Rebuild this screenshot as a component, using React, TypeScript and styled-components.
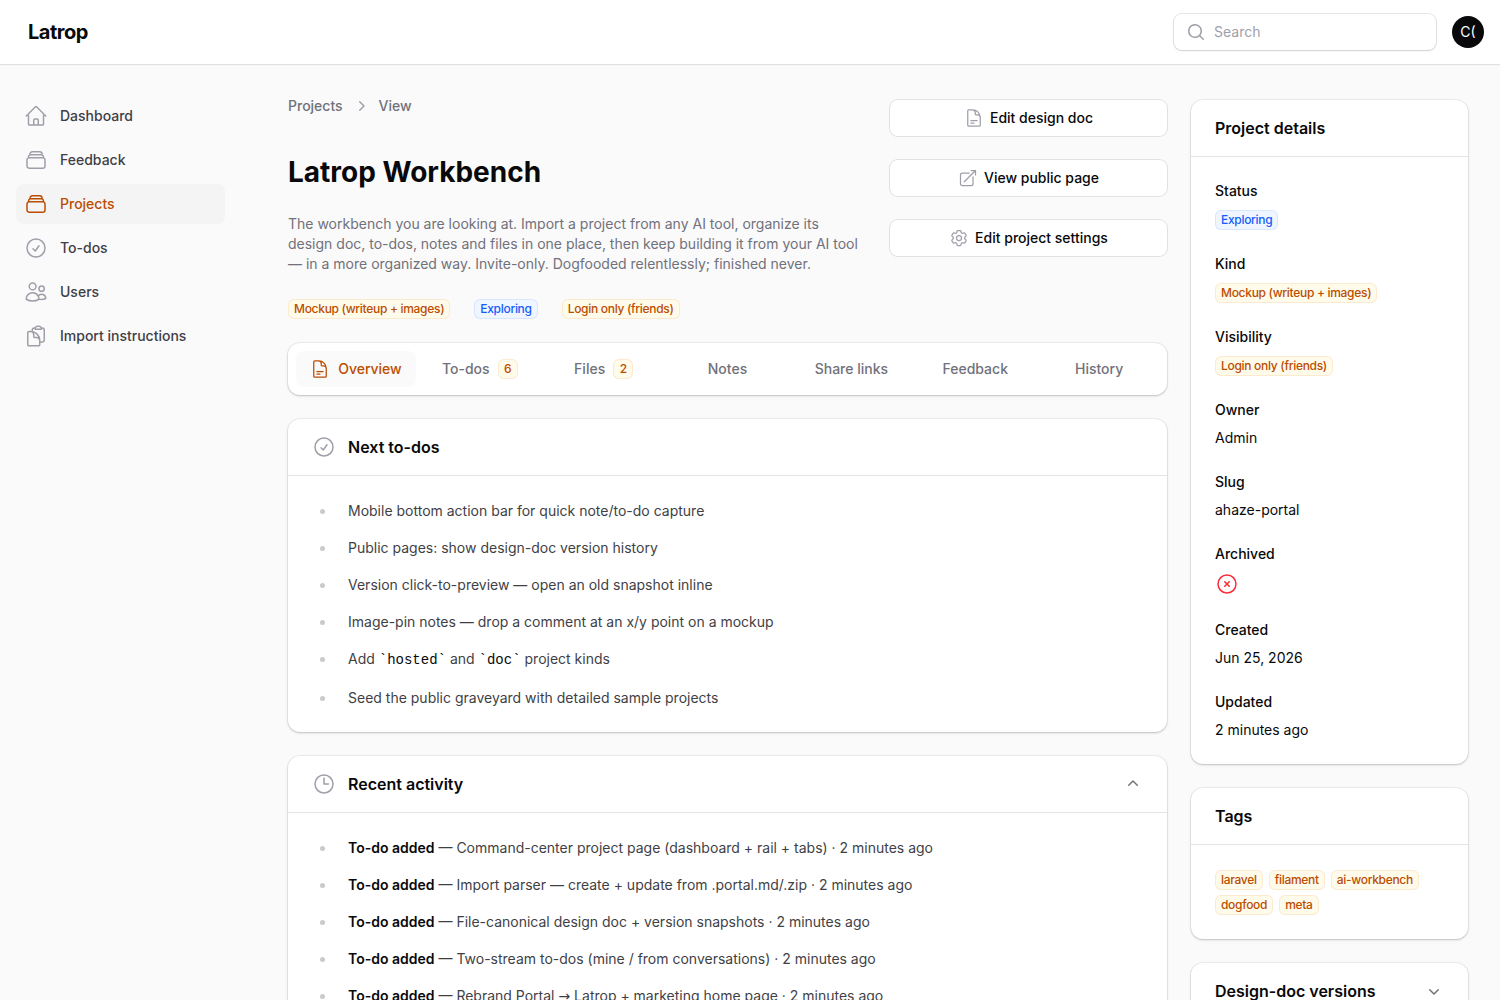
import React, { useState } from 'react';
import styled, { createGlobalStyle, css } from 'styled-components';
import {
  HiOutlineHome,
  HiOutlineRectangleStack,
  HiOutlineCheckCircle,
  HiOutlineUsers,
  HiOutlineClipboardDocument,
  HiMiniMagnifyingGlass,
  HiOutlineDocumentText,
  HiOutlineArrowTopRightOnSquare,
  HiOutlineCog6Tooth,
  HiOutlineClock,
  HiOutlineXCircle,
  HiMiniChevronRight,
  HiMiniChevronUp,
  HiMiniChevronDown,
} from 'react-icons/hi2';
import type { IconType } from 'react-icons';

const color = {
  page: '#fafafa',
  ink: '#09090b',
  text: '#3f3f46',
  muted: '#71717b',
  icon: '#9f9fa9',
  active: '#f4f4f5',
  primary: '#bb4d00',
  danger: '#fb2c36',
  line: '#e4e4e7',
  marker: '#cacacd',
};

const GlobalStyle = createGlobalStyle`
  *, *::before, *::after { box-sizing: border-box; }
  body {
    margin: 0;
    background: ${color.page};
    color: ${color.ink};
    font-family: Inter, 'Noto Sans', sans-serif;
    font-size: 14px;
    line-height: 20px;
  }
  h1, h2, p, ul, ol, dl, dd { margin: 0; padding: 0; }
  a { color: inherit; text-decoration: none; }
  button, input { font: inherit; color: inherit; }
  svg { display: block; flex: none; }
`;

const surface = css`
  background: #fff;
  box-shadow: 0 0 0 1px rgba(9, 9, 11, 0.05), 0 1px 3px rgba(0, 0, 0, 0.1), 0 1px 2px rgba(0, 0, 0, 0.1);
`;

const Topbar = styled.header`
  position: sticky;
  top: 0;
  z-index: 10;
  display: flex;
  align-items: center;
  gap: 16px;
  height: 64px;
  padding: 0 16px 0 28px;
  background: #fff;
  box-shadow: 0 0 0 1px rgba(9, 9, 11, 0.07), 0 1px 2px rgba(0, 0, 0, 0.05);
`;

const Brand = styled.a`
  margin-right: auto;
  font-size: 20px;
  line-height: 28px;
  font-weight: 700;
  letter-spacing: -0.025em;
`;

const SearchBox = styled.label`
  display: flex;
  align-items: center;
  gap: 8px;
  width: 262px;
  height: 36px;
  padding: 0 12px;
  border-radius: 8px;
  background: #fff;
  color: ${color.icon};
  box-shadow: 0 0 0 1px rgba(9, 9, 11, 0.1), 0 1px 2px rgba(0, 0, 0, 0.1);
`;

const SearchInput = styled.input`
  flex: 1;
  min-width: 0;
  padding: 0;
  border: 0;
  outline: 0;
  background: transparent;
  color: ${color.ink};
  &::placeholder { color: ${color.icon}; opacity: 1; }
`;

const Avatar = styled.button`
  width: 32px;
  height: 32px;
  padding: 0;
  border: 0;
  border-radius: 50%;
  background: ${color.ink};
  color: #fff;
`;

const Layout = styled.div`
  display: grid;
  grid-template-columns: 256px minmax(0, 1fr);
`;

const Sidebar = styled.nav`
  display: flex;
  flex-direction: column;
  gap: 4px;
  padding: 32px 31px 32px 16px;
`;

const NavLink = styled.a<{ $active?: boolean }>`
  display: flex;
  align-items: center;
  gap: 12px;
  height: 40px;
  padding: 0 8px;
  border-radius: 8px;
  font-weight: 500;
  color: ${(p) => (p.$active ? color.primary : color.text)};
  background: ${(p) => (p.$active ? color.active : 'transparent')};
  svg { color: ${(p) => (p.$active ? color.primary : color.icon)}; }
`;

const Main = styled.main`
  display: grid;
  grid-template-columns: repeat(4, minmax(0, 1fr));
  gap: 24px;
  align-items: start;
  padding: 32px;
`;

const Primary = styled.div`
  grid-column: span 3;
  display: flex;
  flex-direction: column;
  gap: 24px;
`;

const Rail = styled.aside`
  display: flex;
  flex-direction: column;
  gap: 24px;
  padding-top: 4px;
`;

const Intro = styled.div`
  display: grid;
  grid-template-columns: repeat(3, minmax(0, 1fr));
  gap: 24px;
`;

const IntroText = styled.div`
  grid-column: span 2;
`;

const Actions = styled.div`
  display: flex;
  flex-direction: column;
  gap: 24px;
  padding-top: 4px;
`;

const ActionButton = styled.button`
  display: flex;
  align-items: center;
  justify-content: center;
  gap: 6px;
  height: 36px;
  padding: 0 12px;
  border: 0;
  border-radius: 8px;
  background: #fff;
  font-weight: 500;
  box-shadow: 0 0 0 1px rgba(9, 9, 11, 0.1);
  cursor: pointer;
  svg { color: ${color.icon}; }
`;

const Crumbs = styled.ol`
  display: flex;
  align-items: center;
  gap: 8px;
  list-style: none;
  font-weight: 500;
  color: ${color.muted};
  svg { color: ${color.icon}; }
`;

const Crumb = styled.li`
  display: flex;
  align-items: center;
  gap: 8px;
`;

const Title = styled.h1`
  padding: 36px 0 22px;
  font-size: 28px;
  line-height: 40px;
  font-weight: 700;
`;

const Lead = styled.p`
  color: ${color.muted};
`;

const BadgeRow = styled.div`
  display: flex;
  flex-wrap: wrap;
  gap: 24px;
  padding-top: 25px;
`;

const Badge = styled.span<{ $tone?: 'info' }>`
  display: inline-flex;
  align-items: center;
  justify-content: center;
  min-width: 20px;
  padding: 2px 6px;
  border-radius: 6px;
  font-size: 12px;
  line-height: 16px;
  font-weight: 500;
  letter-spacing: -0.025em;
  color: ${(p) => (p.$tone === 'info' ? '#155dfc' : color.primary)};
  background: ${(p) => (p.$tone === 'info' ? '#eff6ff' : '#fffbeb')};
  box-shadow: inset 0 0 0 1px ${(p) => (p.$tone === 'info' ? 'rgba(21, 93, 252, 0.1)' : 'rgba(225, 113, 0, 0.12)')};
`;

const Tabs = styled.div`
  ${surface}
  display: flex;
  gap: 4px;
  padding: 8px;
  border-radius: 12px;
`;

const Tab = styled.button`
  flex: 1;
  display: flex;
  align-items: center;
  justify-content: center;
  gap: 8px;
  height: 36px;
  padding: 0;
  border: 0;
  border-radius: 8px;
  background: transparent;
  color: ${color.muted};
  font-weight: 500;
  white-space: nowrap;
  cursor: pointer;
  &[aria-selected='true'] {
    background: ${color.page};
    color: ${color.primary};
  }
`;

const Card = styled.section`
  ${surface}
  border-radius: 12px;
`;

const CardHeader = styled.header`
  display: flex;
  align-items: center;
  gap: 12px;
  padding: 16px 24px;
  svg { color: ${color.icon}; }
`;

const CardTitle = styled.h2`
  flex: 1;
  font-size: 16px;
  line-height: 24px;
  font-weight: 600;
`;

const CollapseButton = styled.button`
  padding: 0;
  border: 0;
  background: transparent;
  cursor: pointer;
  svg { color: ${color.muted}; }
`;

const CardBody = styled.div`
  padding: 24px;
  border-top: 1px solid ${color.line};
`;

const List = styled.ul`
  display: flex;
  flex-direction: column;
  gap: 16px;
  padding-left: 24px;
  color: ${color.text};
  line-height: 21px;
`;

const ListItem = styled.li`
  padding-left: 12px;
  &::marker { color: ${color.marker}; }
  strong { font-weight: 600; color: ${color.ink}; }
  code {
    font-family: 'Liberation Mono', monospace;
    font-size: 14px;
    color: ${color.ink};
  }
`;

const Arrow = styled.span`
  font-family: 'DejaVu Sans', sans-serif;
`;

const Details = styled.dl`
  display: flex;
  flex-direction: column;
  gap: 24px;
`;

const Detail = styled.div`
  display: flex;
  flex-direction: column;
  gap: 8px;
  dt { font-weight: 500; }
`;

const DetailBadge = styled.dd`
  display: flex;
  padding-top: 1px;
`;

const TagList = styled.div`
  display: flex;
  flex-wrap: wrap;
  gap: 5px 6px;
  padding-top: 1px;
`;

const navItems: { label: string; icon: IconType; active?: boolean }[] = [
  { label: 'Dashboard', icon: HiOutlineHome },
  { label: 'Feedback', icon: HiOutlineRectangleStack },
  { label: 'Projects', icon: HiOutlineRectangleStack, active: true },
  { label: 'To-dos', icon: HiOutlineCheckCircle },
  { label: 'Users', icon: HiOutlineUsers },
  { label: 'Import instructions', icon: HiOutlineClipboardDocument },
];

const actions: { label: string; icon: IconType }[] = [
  { label: 'Edit design doc', icon: HiOutlineDocumentText },
  { label: 'View public page', icon: HiOutlineArrowTopRightOnSquare },
  { label: 'Edit project settings', icon: HiOutlineCog6Tooth },
];

const tabs: { label: string; icon?: IconType; count?: number }[] = [
  { label: 'Overview', icon: HiOutlineDocumentText },
  { label: 'To-dos', count: 6 },
  { label: 'Files', count: 2 },
  { label: 'Notes' },
  { label: 'Share links' },
  { label: 'Feedback' },
  { label: 'History' },
];

const activity: { id: number; text: React.ReactNode }[] = [
  { id: 1, text: 'Command-center project page (dashboard + rail + tabs)' },
  { id: 2, text: 'Import parser — create + update from .portal.md/.zip' },
  { id: 3, text: 'File-canonical design doc + version snapshots' },
  { id: 4, text: 'Two-stream to-dos (mine / from conversations)' },
  { id: 5, text: <>Rebrand Portal <Arrow>→</Arrow> Latrop + marketing home page</> },
];

const tags = ['laravel', 'filament', 'ai-workbench', 'dogfood', 'meta'];

function Section({
  title,
  icon: Icon,
  collapsible,
  startOpen = true,
  children,
}: {
  title: string;
  icon?: IconType;
  collapsible?: boolean;
  startOpen?: boolean;
  children?: React.ReactNode;
}) {
  const [open, setOpen] = useState(startOpen);
  return (
    <Card>
      <CardHeader>
        {Icon && <Icon size={24} />}
        <CardTitle>{title}</CardTitle>
        {collapsible && (
          <CollapseButton type="button" aria-label={title} aria-expanded={open} onClick={() => setOpen(!open)}>
            {open ? <HiMiniChevronUp size={20} /> : <HiMiniChevronDown size={20} />}
          </CollapseButton>
        )}
      </CardHeader>
      {open && <CardBody>{children}</CardBody>}
    </Card>
  );
}

export default function App() {
  const [tab, setTab] = useState('Overview');
  return (
    <>
      <GlobalStyle />
      <Topbar>
        <Brand href="#">Latrop</Brand>
        <SearchBox>
          <HiMiniMagnifyingGlass size={20} />
          <SearchInput type="search" placeholder="Search" aria-label="Search" />
        </SearchBox>
        <Avatar type="button" aria-label="User menu">C(</Avatar>
      </Topbar>
      <Layout>
        <Sidebar>
          {navItems.map(({ label, icon: Icon, active }) => (
            <NavLink key={label} href="#" $active={active} aria-current={active ? 'page' : undefined}>
              <Icon size={24} />
              {label}
            </NavLink>
          ))}
        </Sidebar>
        <Main>
          <Primary>
            <Intro>
              <IntroText>
                <Crumbs>
                  <Crumb><a href="#">Projects</a></Crumb>
                  <Crumb><HiMiniChevronRight size={20} /><a href="#">View</a></Crumb>
                </Crumbs>
                <Title>Latrop Workbench</Title>
                <Lead>
                  The workbench you are looking at. Import a project from any AI tool, organize its design doc,
                  to-dos, notes and files in one place, then keep building it from your AI tool — in a more
                  organized way. Invite-only. Dogfooded relentlessly; finished never.
                </Lead>
                <BadgeRow>
                  <Badge>Mockup (writeup + images)</Badge>
                  <Badge $tone="info">Exploring</Badge>
                  <Badge>Login only (friends)</Badge>
                </BadgeRow>
              </IntroText>
              <Actions>
                {actions.map(({ label, icon: Icon }) => (
                  <ActionButton key={label} type="button">
                    <Icon size={20} />
                    {label}
                  </ActionButton>
                ))}
              </Actions>
            </Intro>
            <Tabs role="tablist">
              {tabs.map(({ label, icon: Icon, count }) => (
                <Tab key={label} type="button" role="tab" aria-selected={tab === label} onClick={() => setTab(label)}>
                  {Icon && <Icon size={20} />}
                  {label}
                  {count && <Badge>{count}</Badge>}
                </Tab>
              ))}
            </Tabs>
            <Section title="Next to-dos" icon={HiOutlineCheckCircle}>
              <List>
                <ListItem>Mobile bottom action bar for quick note/to-do capture</ListItem>
                <ListItem>Public pages: show design-doc version history</ListItem>
                <ListItem>Version click-to-preview — open an old snapshot inline</ListItem>
                <ListItem>Image-pin notes — drop a comment at an x/y point on a mockup</ListItem>
                <ListItem>Add <code>`hosted`</code> and <code>`doc`</code> project kinds</ListItem>
                <ListItem>Seed the public graveyard with detailed sample projects</ListItem>
              </List>
            </Section>
            <Section title="Recent activity" icon={HiOutlineClock} collapsible>
              <List>
                {activity.map(({ id, text }) => (
                  <ListItem key={id}><strong>To-do added</strong> — {text} · 2 minutes ago</ListItem>
                ))}
              </List>
            </Section>
          </Primary>
          <Rail>
            <Section title="Project details">
              <Details>
                <Detail><dt>Status</dt><DetailBadge><Badge $tone="info">Exploring</Badge></DetailBadge></Detail>
                <Detail><dt>Kind</dt><DetailBadge><Badge>Mockup (writeup + images)</Badge></DetailBadge></Detail>
                <Detail><dt>Visibility</dt><DetailBadge><Badge>Login only (friends)</Badge></DetailBadge></Detail>
                <Detail><dt>Owner</dt><dd>Admin</dd></Detail>
                <Detail><dt>Slug</dt><dd>ahaze-portal</dd></Detail>
                <Detail><dt>Archived</dt><dd><HiOutlineXCircle size={24} color={color.danger} /></dd></Detail>
                <Detail><dt>Created</dt><dd>Jun 25, 2026</dd></Detail>
                <Detail><dt>Updated</dt><dd>2 minutes ago</dd></Detail>
              </Details>
            </Section>
            <Section title="Tags">
              <TagList>{tags.map((tag) => <Badge key={tag}>{tag}</Badge>)}</TagList>
            </Section>
            <Section title="Design-doc versions" collapsible startOpen={false} />
          </Rail>
        </Main>
      </Layout>
    </>
  );
}
